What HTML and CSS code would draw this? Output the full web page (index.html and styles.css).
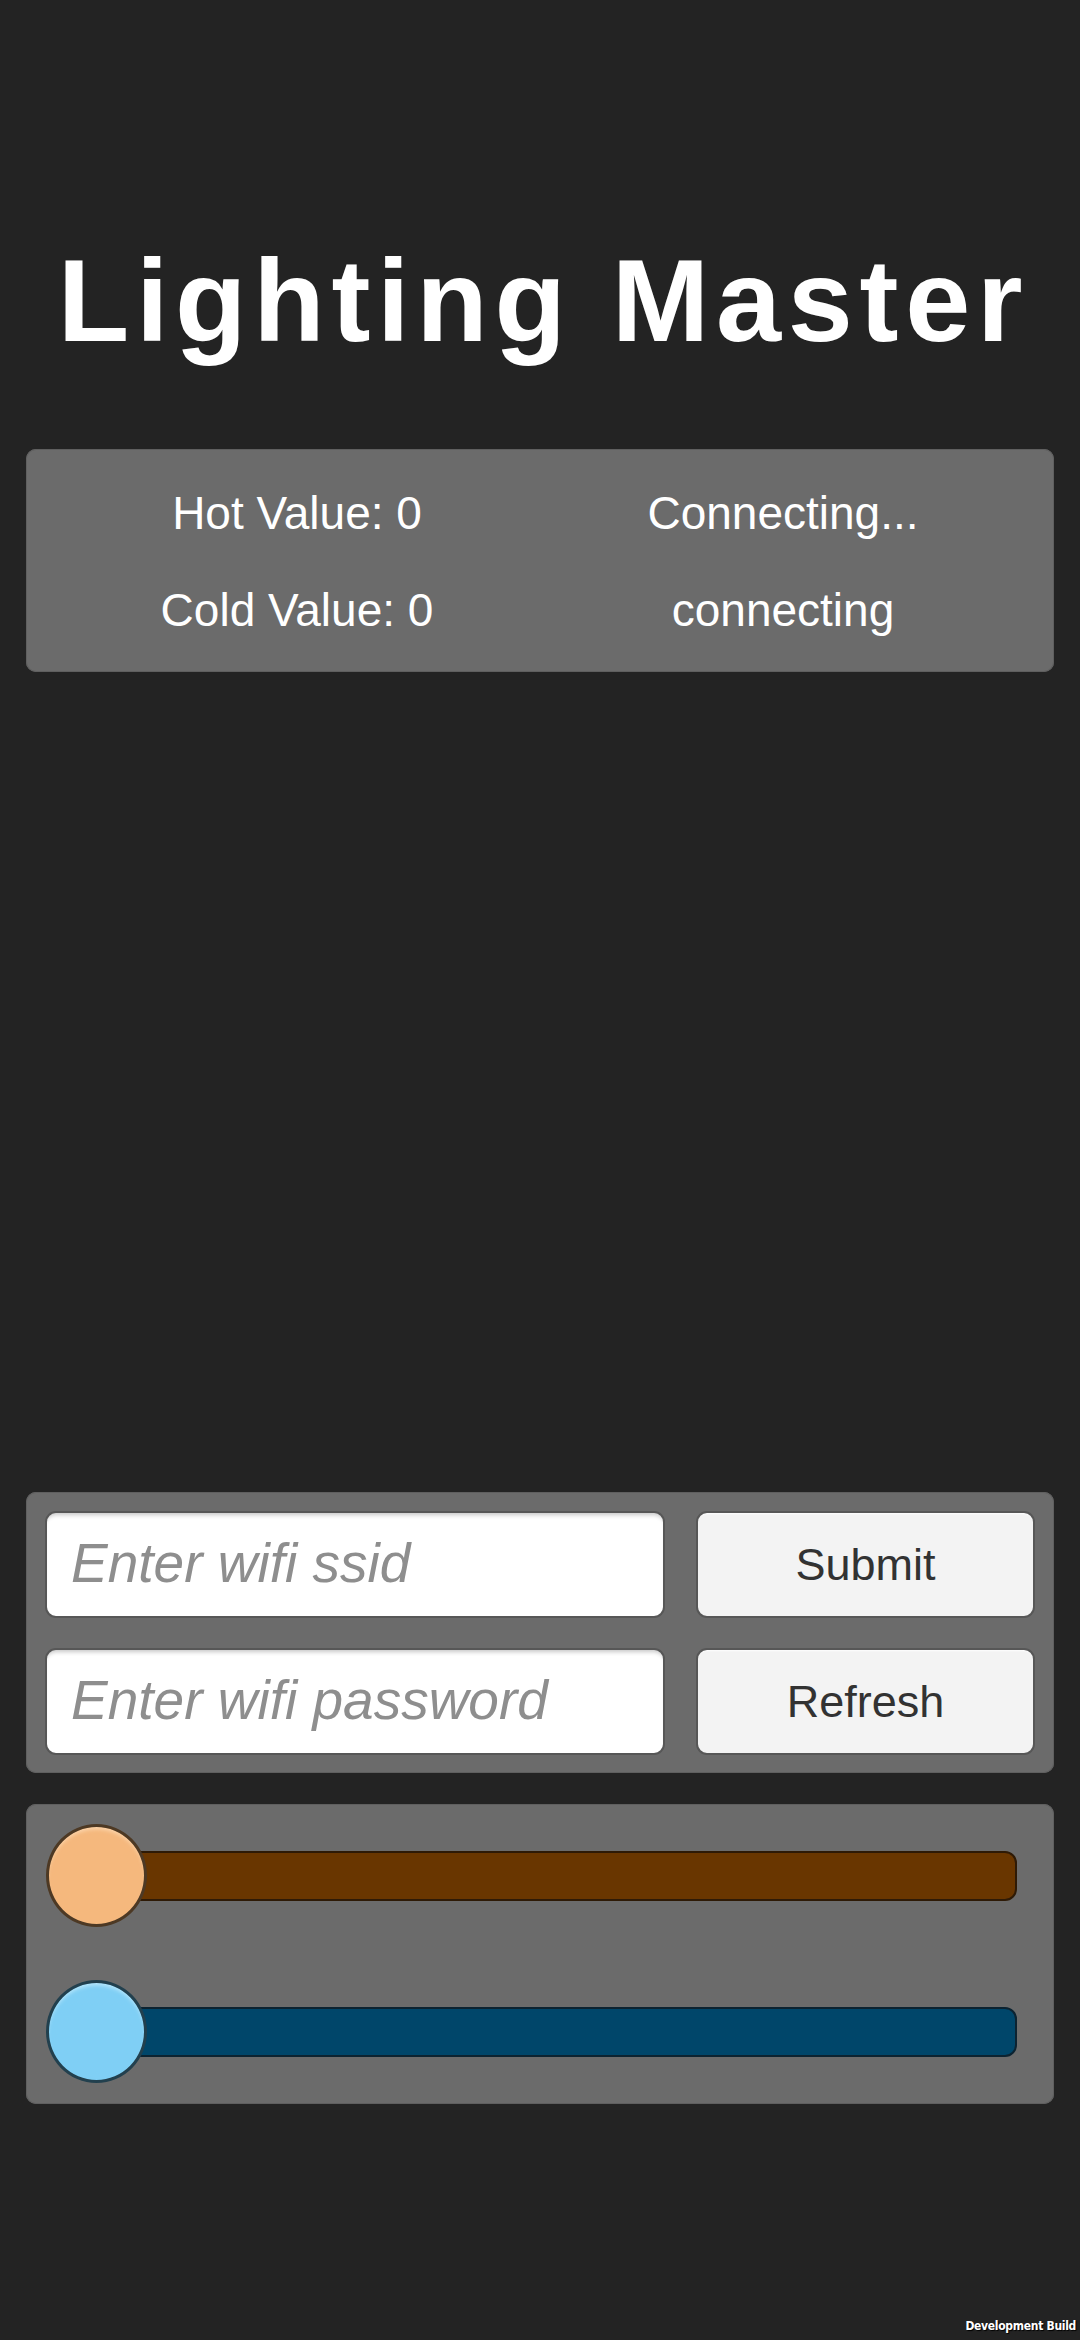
FILE: index.html
```html
<!DOCTYPE html>
<html>
<head>
<meta charset="utf-8">
<link rel="stylesheet" href="styles.css">
</head>
<body>
<div class="page">
  <h1 class="title">Lighting Master</h1>
  <section class="panel info">
    <div class="cell">Hot Value: 0</div>
    <div class="cell">Connecting...</div>
    <div class="cell">Cold Value: 0</div>
    <div class="cell">connecting</div>
  </section>
  <section class="panel form">
    <input class="field" type="text" placeholder="Enter wifi ssid">
    <button class="btn">Submit</button>
    <input class="field" type="password" placeholder="Enter wifi password">
    <button class="btn">Refresh</button>
  </section>
  <section class="panel sliders">
    <div class="slider hot">
      <div class="track"></div>
      <div class="knob"></div>
    </div>
    <div class="slider cold">
      <div class="track"></div>
      <div class="knob"></div>
    </div>
  </section>
  <div class="devbuild">Development Build</div>
</div>
</body>
</html>
```
FILE: styles.css
```css
html, body {
  margin: 0;
  padding: 0;
  background: #232323;
}
.page {
  position: relative;
  width: 1080px;
  height: 2340px;
  overflow: hidden;
  font-family: "Liberation Sans", Arial, sans-serif;
  color: #ffffff;
}
.title {
  margin: 0;
  padding-top: 242px;
  padding-left: 7px;
  font-size: 117px;
  line-height: 117px;
  font-weight: bold;
  letter-spacing: 6.7px;
  text-align: center;
  color: #ffffff;
}
.panel {
  margin: 0 26px;
  background: #6b6b6b;
  border-radius: 10px;
  box-sizing: border-box;
  box-shadow: inset 0 0 0 1px #5f5f5f;
}
.info {
  margin-top: 90px;
  height: 223px;
  padding: 16px 28px 0;
  display: grid;
  grid-template-columns: 1fr 1fr;
  grid-auto-rows: 97px;
}
.cell {
  font-size: 46px;
  line-height: 97px;
  text-align: center;
  color: #ffffff;
}
.form {
  margin-top: 820px;
  height: 281px;
  padding: 19px;
  display: grid;
  grid-template-columns: 620px 339px;
  grid-template-rows: 107px 107px;
  column-gap: 31px;
  row-gap: 30px;
}
.field {
  box-sizing: border-box;
  width: 100%;
  height: 100%;
  margin: 0;
  background: #ffffff;
  border: 2px solid #575757;
  border-radius: 11px;
  box-shadow: inset 0 5px 4px -3px rgba(0, 0, 0, 0.22);
  padding: 0 0 4px 24px;
  font-family: "Liberation Sans", Arial, sans-serif;
  font-size: 55px;
  font-style: italic;
  color: #333;
  outline: none;
}
.field::placeholder {
  color: #8e8e8e;
  font-style: italic;
  opacity: 1;
}
.btn {
  box-sizing: border-box;
  width: 100%;
  height: 100%;
  margin: 0;
  background: #f3f3f3;
  border: 2px solid #575757;
  border-radius: 11px;
  box-shadow: inset 0 3px 2px -2px rgba(255, 255, 255, 0.9);
  font-family: "Liberation Sans", Arial, sans-serif;
  font-size: 45px;
  color: #323232;
  padding: 0;
}
.sliders {
  margin-top: 31px;
  height: 300px;
  padding: 20px 37px 20px 20px;
  display: flex;
  flex-direction: column;
  gap: 53px;
}
.slider {
  position: relative;
  height: 103px;
  display: flex;
  align-items: center;
}
.track {
  flex: 1;
  height: 50px;
  margin-left: 50px;
  box-sizing: border-box;
  border-radius: 12px;
}
.hot .track {
  background: #693600;
  border: 2px solid #2e1a06;
}
.cold .track {
  background: #00466a;
  border: 2px solid #0c2331;
}
.knob {
  position: absolute;
  left: 0;
  top: 0;
  width: 101px;
  height: 103px;
  box-sizing: border-box;
  border-radius: 50%;
}
.hot .knob {
  background: #f5b87d;
  border: 3px solid #4d3924;
  box-shadow: inset 0 4px 4px -2px rgba(255, 230, 200, 0.7);
}
.cold .knob {
  background: #7fcff5;
  border: 3px solid #22404e;
  box-shadow: inset 0 4px 4px -2px rgba(220, 245, 255, 0.7);
}
.devbuild {
  position: absolute;
  right: 4px;
  bottom: 7px;
  font-family: "DejaVu Sans Condensed", "DejaVu Sans", sans-serif;
  font-weight: bold;
  font-size: 12px;
  line-height: 14px;
  color: #ffffff;
  text-shadow: 1px 1px 1px #000;
  letter-spacing: -0.3px;
}
```
